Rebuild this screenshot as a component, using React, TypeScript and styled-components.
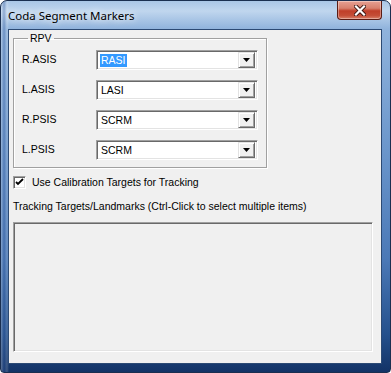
import React from "react";
import styled, { createGlobalStyle } from "styled-components";

const GlobalStyle = createGlobalStyle`
  html, body {
    margin: 0;
    padding: 0;
    width: 391px;
    height: 373px;
    overflow: hidden;
    background: #ffffff;
  }
`;

const Window = styled.div`
  width: 391px;
  height: 373px;
  box-sizing: border-box;
  display: flex;
  flex-direction: column;
  padding: 0 8px 8px 7px;
  border: 1px solid #1a2f50;
  border-radius: 7px 7px 4px 4px;
  background:
    linear-gradient(90deg, rgba(255,255,255,0.3) 0px, rgba(40,80,150,0.35) 3px, rgba(255,255,255,0.18) 6px, transparent 8px),
    linear-gradient(180deg, #a9c6e6 0px, #c0d6ee 10px, #90b3dc 28px, #6b96cb 40%, #4a78b6 70%, #24508c 90%, #133366 100%);
`;

const TitleBar = styled.div`
  height: 28px;
  flex: 0 0 28px;
  display: flex;
  justify-content: space-between;
  align-items: flex-start;
`;

const Title = styled.span`
  margin-top: 7px;
  font-family: "Noto Sans", "Open Sans", sans-serif;
  font-size: 11.5px;
  line-height: 16px;
  color: #000;
  text-shadow: 0 0 6px rgba(255,255,255,0.95), 0 0 10px rgba(255,255,255,0.8);
`;

const CloseButton = styled.div`
  width: 45px;
  height: 19px;
  box-sizing: border-box;
  display: flex;
  align-items: center;
  justify-content: center;
  border: 1px solid #5a1c14;
  border-top: none;
  border-radius: 0 0 4px 4px;
  background: linear-gradient(180deg, #e6a093 0%, #d7806d 40%, #c03f29 55%, #c44d36 80%, #d98068 100%);
  box-shadow: inset 0 0 0 1px rgba(255,255,255,0.35);
`;

const Client = styled.div`
  flex: 1;
  box-sizing: border-box;
  display: flex;
  flex-direction: column;
  padding: 0 8px 11px 4px;
  background: #f0f0f0;
  border: 1px solid #2c4a74;
  font-family: "Liberation Sans", Arial, sans-serif;
  font-size: 10.5px;
  color: #000;
`;

const GroupBox = styled.fieldset`
  width: 254px;
  box-sizing: border-box;
  margin: 2px 0 0 0;
  padding: 5px 8px 7px 8px;
  border: 1px solid #a0a0a0;
  box-shadow: inset 1px 1px 0 #fff, 1px 1px 0 #fff;
  display: grid;
  grid-template-columns: 74px 162px;
  row-gap: 10px;
  align-items: center;
`;

const Legend = styled.legend`
  padding: 0 2px;
  margin-left: 6px;
  line-height: 13px;
`;

const FieldLabel = styled.span`
  line-height: 13px;
  margin-top: -2px;
`;

const Combo = styled.div`
  height: 20px;
  box-sizing: border-box;
  display: flex;
  align-items: center;
  padding: 2px;
  background: #fff;
  border: 1px solid;
  border-color: #a0a0a0 #fff #fff #a0a0a0;
  box-shadow: inset 1px 1px 0 #696969, inset -1px -1px 0 #e3e3e3;
`;

const ComboValue = styled.div`
  flex: 1;
  display: flex;
  align-items: center;
  padding-left: 1px;
`;

const ValueText = styled.span<{ $selected?: boolean }>`
  line-height: 13px;
  padding: 0 1px;
  background: ${(p) => (p.$selected ? "#3399ff" : "transparent")};
  color: ${(p) => (p.$selected ? "#fff" : "#000")};
`;

const DropButton = styled.div`
  width: 17px;
  height: 16px;
  box-sizing: border-box;
  display: flex;
  align-items: center;
  justify-content: center;
  background: #f0f0f0;
  border: 1px solid;
  border-color: #e3e3e3 #696969 #696969 #e3e3e3;
  box-shadow: inset 1px 1px 0 #fff, inset -1px -1px 0 #a0a0a0;
`;

const CheckRow = styled.label`
  display: flex;
  align-items: center;
  gap: 6px;
  margin-top: 8px;
  line-height: 13px;
`;

const CheckBox = styled.span`
  width: 13px;
  height: 13px;
  box-sizing: border-box;
  display: flex;
  align-items: center;
  justify-content: center;
  background: #fff;
  border: 1px solid;
  border-color: #a0a0a0 #fff #fff #a0a0a0;
  box-shadow: inset 1px 1px 0 #696969, inset -1px -1px 0 #e3e3e3;
`;

const Caption = styled.div`
  margin-top: 11px;
  line-height: 13px;
`;

const ListBox = styled.div`
  flex: 1;
  margin-top: 9px;
  box-sizing: border-box;
  background: #f0f0f0;
  border: 1px solid;
  border-color: #a0a0a0 #fff #fff #a0a0a0;
  box-shadow: inset 1px 1px 0 #696969, inset -1px -1px 0 #e3e3e3;
`;

const Arrow = () => (
  <svg width="7" height="4" viewBox="0 0 7 4">
    <path d="M0 0h7L3.5 4z" fill="#000" />
  </svg>
);

const markers = [
  { label: "R.ASIS", value: "RASI", selected: true },
  { label: "L.ASIS", value: "LASI" },
  { label: "R.PSIS", value: "SCRM" },
  { label: "L.PSIS", value: "SCRM" },
];

export default function App() {
  return (
    <>
      <GlobalStyle />
      <Window>
        <TitleBar>
          <Title>Coda Segment Markers</Title>
          <CloseButton>
            <svg width="12" height="11" viewBox="0 0 12 11">
              <path d="M2 1.5L10 9.5M10 1.5L2 9.5" stroke="#3a1510" strokeWidth="4" strokeLinecap="square" />
              <path d="M2 1.5L10 9.5M10 1.5L2 9.5" stroke="#fff" strokeWidth="2.2" strokeLinecap="square" />
            </svg>
          </CloseButton>
        </TitleBar>
        <Client>
          <GroupBox>
            <Legend>RPV</Legend>
            {markers.map((m) => (
              <React.Fragment key={m.label}>
                <FieldLabel>{m.label}</FieldLabel>
                <Combo>
                  <ComboValue>
                    <ValueText $selected={m.selected}>{m.value}</ValueText>
                  </ComboValue>
                  <DropButton>
                    <Arrow />
                  </DropButton>
                </Combo>
              </React.Fragment>
            ))}
          </GroupBox>
          <CheckRow>
            <CheckBox>
              <svg width="9" height="9" viewBox="0 0 9 9">
                <path d="M1 4l2 2 5-5" fill="none" stroke="#000" strokeWidth="1.8" />
              </svg>
            </CheckBox>
            Use Calibration Targets for Tracking
          </CheckRow>
          <Caption>Tracking Targets/Landmarks (Ctrl-Click to select multiple items)</Caption>
          <ListBox />
        </Client>
      </Window>
    </>
  );
}
